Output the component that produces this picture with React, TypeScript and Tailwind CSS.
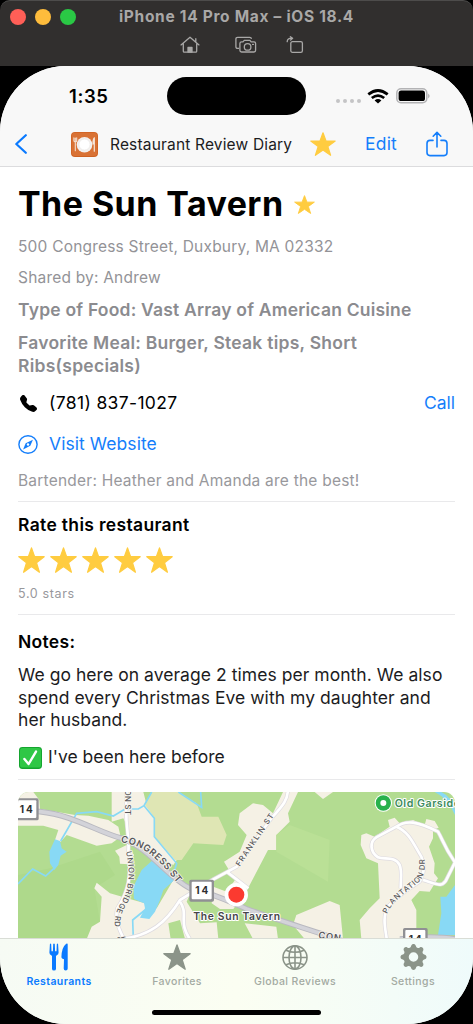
import type { ReactNode } from 'react'
import { BsGearFill, BsTelephoneFill } from 'react-icons/bs'

type IconProps = { className?: string }

const StarIcon = ({ className }: IconProps) => (
  <svg viewBox="0 0 26 24" preserveAspectRatio="none" className={className} fill="currentColor" stroke="currentColor" strokeWidth="1.2" strokeLinejoin="round">
    <path d="M13 .8 16 9h9.2l-7.4 5.5 2.8 8.8L13 18l-7.6 5.3 2.8-8.8L.8 9H10z" />
  </svg>
)

const HomeIcon = () => (
  <svg viewBox="0 0 20 18" className="h-[18px] w-5" fill="none" stroke="currentColor" strokeWidth="1.3" strokeLinecap="round" strokeLinejoin="round">
    <path d="M1 8.9 10 1.2l9 7.7M3.3 8v7.2q0 1 1 1h11.4q1 0 1-1V8M15.8 5.6V2.7" />
    <path d="M8 16v-4.6h4V16z" fill="currentColor" />
  </svg>
)

const CaptureIcon = () => (
  <svg viewBox="0 0 22 18" className="h-[18px] w-[22px]" fill="none" stroke="currentColor" strokeWidth="1.3" strokeLinejoin="round">
    <path d="M4 12.4H2.6q-1.7 0-1.7-1.7V3q0-1.7 1.7-1.7h12.2q1.4 0 1.7 1.5" />
    <path d="M6.6 5.9H8l1.3-1.6h5.6l1.3 1.6h2.7q1.7 0 1.7 1.7v6.7q0 1.7-1.7 1.7H6.6q-1.7 0-1.7-1.7V7.6q0-1.7 1.7-1.7z" />
    <circle cx="12.6" cy="10.9" r="3.3" />
    <path d="M17.6 8.4h.8" strokeLinecap="round" />
  </svg>
)

const RotateIcon = () => (
  <svg viewBox="0 0 18 18" className="h-[18px] w-[18px]" fill="none" stroke="currentColor" strokeWidth="1.3" strokeLinecap="round" strokeLinejoin="round">
    <rect x="4.8" y="5.7" width="11.6" height="10.6" rx="1.6" />
    <path d="M1.2 5.6q.2-3.4 4.6-3.4M4.4.7l2.2 1.6-2 1.8" />
  </svg>
)

const PlateIcon = () => (
  <svg viewBox="0 0 27 25" preserveAspectRatio="none" className="h-[25px] w-[27px]">
    <rect width="27" height="25" rx="4" fill="#cf6222" />
    <rect x=".7" y=".7" width="25.6" height="23.2" rx="3.4" fill="#d97235" />
    <circle cx="13.5" cy="12.7" r="7.8" fill="#f3f1ef" />
    <circle cx="13.5" cy="12.5" r="5.6" fill="#fff" stroke="#e6e3df" strokeWidth=".6" />
    <path d="M4.3 6v12.8M2.9 5.8v3q0 1.2 1.4 1.2t1.4-1.2v-3" stroke="#f5dfcf" strokeWidth="1.1" fill="none" strokeLinecap="round" />
    <path d="M23.3 5.8v13.4M23.3 6q-1.4 1.5-1.3 6h1.3" stroke="#f5e6da" strokeWidth="1.2" fill="#f5e6da" strokeLinecap="round" />
  </svg>
)

const ShareIcon = () => (
  <svg viewBox="0 0 22 26" className="ml-7 h-[26px] w-[22px]" fill="none" stroke="currentColor" strokeWidth="1.6" strokeLinecap="round" strokeLinejoin="round">
    <path d="M7 9.4H4q-3 0-3 3v9.2q0 3 3 3h14q3 0 3-3v-9.2q0-3-3-3h-3M11 16V1.6M7.2 5.2 11 1.4l3.8 3.8" />
  </svg>
)

const CompassIcon = () => (
  <svg viewBox="0 0 20 19" preserveAspectRatio="none" className="h-[19px] w-5" fill="none" stroke="currentColor" strokeWidth="1.4">
    <ellipse cx="10" cy="9.5" rx="9.1" ry="8.7" />
    <path d="m14.9 4.7-2.6 6.1-7.2 3.6 2.6-6.2z" fill="currentColor" stroke="none" />
    <circle cx="10" cy="9.5" r="1.2" fill="#fff" stroke="none" />
  </svg>
)

const CheckIcon = () => (
  <svg viewBox="0 0 23 22" className="h-[22px] w-[23px]">
    <rect width="23" height="22" rx="3.4" fill="#15a52f" />
    <rect x="1" y="1" width="21" height="19.6" rx="2.6" fill="#2fc746" />
    <path d="m5.4 12 4.2 5L17 4.6" fill="none" stroke="#fff" strokeWidth="2.4" strokeLinecap="round" strokeLinejoin="round" />
  </svg>
)

const ForkKnifeIcon = () => (
  <svg viewBox="0 0 20 28" className="h-7 w-5" fill="currentColor">
    <path d="M.9 1.200Q1.600 0 2.200 1.200L2.500 8.200h1.400L4.200 1q.8-1 1.600 0l.3 7.200h1.400L7.800 1.200q.7-1.200 1.300 0l.5 8.200q0 2-1.800 2.900l-.8.7v12.700q0 1.900-2 1.900t-2-1.900V13l-.8-.7Q.4 11.400.4 9.400z" />
    <path d="M17.200.7q1.500-.7 1.500.7v24.200q0 2-2 2t-2-2l.3-9.400q-2.600-.3-2.600-2Q12.600 4.200 17.200.7z" />
  </svg>
)

const GlobeIcon = () => (
  <svg viewBox="0 0 26 25" className="h-[25px] w-[26px]" fill="none" stroke="currentColor" strokeWidth="1.6">
    <ellipse cx="13" cy="12.500" rx="12" ry="11.600" />
    <ellipse cx="13" cy="12.500" rx="6" ry="11.600" />
    <path d="M13 1v23M1 12.500h24M4 5.200q9 4.200 18 0M4 19.800q9-4.200 18 0" />
  </svg>
)

function Shield({ x, y }: { x: number; y: number }) {
  return (
    <g transform={`translate(${x} ${y})`}>
      <rect x="-37" y="-33" width="74" height="66" rx="5" fill="#909094" />
      <rect x="-30" y="-27" width="60" height="53" rx="3" fill="#fff" />
      <text y="11" textAnchor="middle" fontSize="30" fontWeight="700" fill="#2e2e30" textLength="39">14</text>
    </g>
  )
}

const route14 = 'M54 75L120 80C220 90 290 140 365 160C450 190 500 275 570 310C640 325 690 350 740 372C830 405 950 440 1050 475M1200 462Q1300 450 1365 462'

const westRoads = [
  'M380 10C372 130 390 150 385 200C396 270 385 320 352 370C342 410 362 440 375 470',
  'M360 462C450 455 500 410 540 345L640 283L710 245L814 100C850 60 864 45 864 10',
  'M540 350C568 390 530 410 575 470',
  'M680 260L745 310',
]

const eastRoads = [
  'M490 125L430 157C410 170 410 200 435 217C455 225 485 212 500 240C508 260 503 280 503 310',
  'M490 125C520 105 550 108 615 140C630 165 630 180 666 232L638 288C625 305 620 300 570 285',
  'M490 125C530 140 545 185 565 215C577 245 573 265 560 290C530 310 495 330 465 365C445 400 460 440 462 470',
]

// Units are a third of a pixel. The eastern half has its own origin at x=699.
function AreaMap() {
  return (
    <svg viewBox="54 21 1311 441" className="block h-[147px] w-[437px] shrink-0 rounded-t-[11px]" fontFamily="Inter, sans-serif">
      <rect x="54" y="21" width="1311" height="441" fill="#b3dc91" />
      <path d="M54 270L150 250 300 200 345 270 283 310 300 410 270 462H54z" fill="#aed98b" />
      <g fill="#f5f1e5">
        <path d="M54 21H100L118 45 120 72 225 90 265 92 325 105 355 125 362 155 335 175 290 182 200 150 182 170 165 165 175 135 130 122H54z" />
        <path d="M335 21H430L440 60 465 100V155L530 225 520 240 380 170 385 130 370 100 335 110z" />
        <path d="M345 197L380 180 402 210 385 238 360 236 358 215z" />
        <path d="M290 293L330 325 400 345 435 355 435 380 470 370 520 285 575 315 560 350 600 415 650 412 655 462H260L275 425 300 410 305 335 283 310z" />
        <path d="M672 230L719 200 740 150 714 120 719 85 759 55 789 60 819 85 849 21H894L864 85 869 110 829 150V195L804 195 744 310 700 372 660 372 635 355 640 305 680 320 705 285z" />
      </g>
      <path d="M505 415L540 405 555 462H512z" fill="#b3dc91" />
      <path d="M455 21H535L590 55 605 95H655L680 150 670 180 580 175 545 225H525L465 155V100L435 60z" fill="#dfe6b4" />
      <g fill="#88d9f5">
        <path d="M165 163L180 168 185 190 200 200 182 212 175 240 163 255 150 235 148 200z" />
        <path d="M455 228L475 235 490 250 520 268V288L490 315 480 345 465 380 448 402 420 398 435 370 432 355 402 342 400 305 425 255z" />
      </g>
      <path d="M182 168L230 85 290 80 340 93 375 72H415L432 62 455 21M432 62L463 100V155L530 235 522 262M535 21L605 67 602 21M54 297L98 252 137 273 162 250M435 375L398 405 400 462" fill="none" stroke="#88d9f5" strokeWidth="5" />
      <g transform="translate(699 0)">
        <path d="M170 120L290 165 285 290 130 200V150z" fill="#bae096" />
        <g fill="#f5f1e5">
          <path d="M245 21H300L270 42z" />
          <path d="M190 390L290 348 320 360 330 462H215L180 420zM35 415L130 425 135 462H60z" />
          <path d="M385 150L400 145 425 155 470 125 465 105 485 98 500 115 540 105 575 120 580 102 605 108 617 128 600 135V160L588 185 605 235 603 265 615 280 590 320 560 318 535 345 550 375V462H385L380 405 410 370 440 340 435 235 400 220 383 180z" />
        </g>
        <path d="M666 300L640 335H622L625 385 615 450H666zM605 21Q645 40 666 90V75Q655 35 625 21z" fill="#88d9f5" />
      </g>
      <g fill="none" stroke="#dedbe0" strokeWidth="12">
        {westRoads.map((d) => <path key={d} d={d} />)}
        <g transform="translate(699 0)">{eastRoads.map((d) => <path key={d} d={d} />)}</g>
      </g>
      <g fill="none" stroke="#fff" strokeWidth="8">
        {westRoads.map((d) => <path key={d} d={d} />)}
        <g transform="translate(699 0)">{eastRoads.map((d) => <path key={d} d={d} />)}</g>
      </g>
      <path d={route14} fill="none" stroke="#b9b9c0" strokeWidth="17" />
      <path d={route14} fill="none" stroke="#d3d3d9" strokeWidth="11" />

      {/* Street names */}
      <defs>
        <path id="congress" d="M362 172C440 180 485 235 538 302" />
        <path id="union" d="M378 200C394 270 386 320 356 365C342 392 343 420 347 450" />
        <path id="franklin" d="M719 245L824 90" />
        <path id="plantation" d="M1161 387C1180 340 1235 315 1262 285C1278 260 1274 240 1274 200" />
      </defs>
      <g fill="#58585b" stroke="#f8f6ef" strokeWidth="5" paintOrder="stroke" fontSize="23" fontWeight="500">
        <text fontSize="28" fontWeight="600"><textPath href="#congress" textLength="216">CONGRESS ST</textPath></text>
        <text><textPath href="#union" textLength="234">UNION BRIDGE RD</textPath></text>
        <text><textPath href="#franklin" textLength="184">FRANKLIN ST</textPath></text>
        <text><textPath href="#plantation" textLength="210">PLANTATION DR</textPath></text>
        <text transform="translate(374 14) rotate(90)" textLength="76">ON ST</text>
        <text transform="translate(954 459) rotate(9)" fontSize="28" fontWeight="600" letterSpacing="2">CON.</text>
        <text transform="translate(350 475) rotate(-8)">ST</text>
      </g>
      <Shield x={79} y={73} />
      <Shield x={605} y={317} />
      <Shield x={1246} y={462} />
      <circle cx="709" cy="329" r="35" fill="#fff" />
      <circle cx="709" cy="329" r="24" fill="#fb3a30" />
      <g stroke="#fff" strokeWidth="6" strokeLinejoin="round" paintOrder="stroke" fontWeight="600">
        <text x="580" y="405" fontSize="31" fill="#454548" textLength="260">The Sun Tavern</text>
        <text x="1184" y="66" fontSize="32" fill="#3b8a5c" textLength="196">Old Garside</text>
      </g>
      <circle cx="1150" cy="54" r="26" fill="#fff" />
      <circle cx="1150" cy="54" r="23" fill="#28b14c" />
      <circle cx="1150" cy="54" r="9" fill="#fff" />
    </svg>
  )
}

const Divider = ({ className = '' }: IconProps) => <div className={`h-px shrink-0 bg-[#e9e9eb] ${className}`} />

function Tab({ label, active, children }: { label: string; active?: boolean; children: ReactNode }) {
  return (
    <div className={`flex w-[118px] flex-col items-center ${active ? 'text-[#0a7aff]' : 'text-[#8b9489]'}`}>
      <div className="flex h-[30px] items-center justify-center">{children}</div>
      <span className={`mt-0.5 text-[10.5px] leading-4 tracking-[0.4px] ${active ? 'font-semibold' : 'font-medium text-[#a3aaa2]'}`}>{label}</span>
    </div>
  )
}

export default function App() {
  return (
    <div className="flex h-[1024px] w-[473px] flex-col overflow-hidden bg-black font-['Inter',sans-serif] whitespace-nowrap">
      {/* Simulator title bar */}
      <div className="relative h-[66px] shrink-0 rounded-t-[10px] border-t border-[#4d4c4b] bg-[#312f2e] text-[#a9a8a7]">
        <div className="flex h-8 items-center justify-center">
          <span className="text-[15.5px] font-bold tracking-[0.7px]">iPhone 14 Pro Max – iOS 18.4</span>
        </div>
        <div className="absolute top-2 left-[10px] flex gap-[9px]">
          <span className="size-4 rounded-full bg-[#ff5f57]" />
          <span className="size-4 rounded-full bg-[#febc3c]" />
          <span className="size-4 rounded-full bg-[#2ac845]" />
        </div>
        <div className="flex items-center pt-[3px] pl-[180px]">
          <HomeIcon />
          <div className="ml-[35px]"><CaptureIcon /></div>
          <div className="ml-[29px]"><RotateIcon /></div>
        </div>
      </div>

      <div className="flex h-[958px] flex-col overflow-hidden rounded-[66px] bg-white">
        {/* Status bar */}
        <header className="h-[101px] shrink-0 border-b border-[#dcdcde] bg-[#f8f8f8]">
          <div className="flex h-[60px] items-center">
            <span className="mt-0.5 ml-[69px] w-[98px] text-[18.5px] font-semibold tracking-[0.6px]">1:35</span>
            <div className="h-[38px] w-[139px] rounded-full bg-black" />
            <div className="mt-[9px] ml-[30px] flex gap-[3px]">
              {[0, 1, 2, 3].map((i) => <span key={i} className="size-1 rounded-full bg-[#c4c4c6]" />)}
            </div>
            <svg viewBox="0 0 22 15" className="ml-[6px] h-[15px] w-[22px]" fill="none" stroke="#000" strokeWidth="2.700">
              <path d="M1.300 5.400Q11-2.400 20.700 5.400M4.800 9Q11 4.200 17.200 9" />
              <path d="M7.600 11.400Q11 8.600 14.400 11.400L11 14.600z" fill="#000" stroke="none" />
            </svg>
            <svg viewBox="0 0 35 16" className="ml-[7px] h-4 w-[35px]">
              <rect x=".8" y=".8" width="30" height="14" rx="4.200" fill="none" stroke="#b3b3b5" strokeWidth="1.500" />
              <rect x="2.600" y="2.600" width="26.400" height="10.400" rx="2.600" />
              <path d="M32.300 5.400q2.400 2.500 0 5z" fill="#9d9d9f" />
            </svg>
          </div>
          <div className="flex h-9 items-center text-[#147efb]">
            <svg viewBox="0 0 12 20" className="ml-[15px] h-5 w-3" fill="none" stroke="#0a7aff" strokeWidth="2.200" strokeLinecap="round" strokeLinejoin="round">
              <path d="M10.800 1.200 1.300 10l9.500 8.800" />
            </svg>
            <div className="ml-[44px]"><PlateIcon /></div>
            <span className="mt-px ml-3 w-[200px] text-[15.5px] tracking-[0.17px] text-[#1c1c1e]">Restaurant Review Diary</span>
            <StarIcon className="h-6 w-[26px] text-[#ffcc40]" />
            <span className="ml-[29px] w-[33px] text-[17.5px] tracking-[0.2px]">Edit</span>
            <ShareIcon />
          </div>
        </header>

        <main className="flex h-[771px] shrink-0 flex-col overflow-hidden px-[18px] text-[#8b8b8f]">
          <div className="mt-[15px] flex h-11 shrink-0 items-center text-black">
            <h1 className="w-[276px] text-[34px] leading-[44px] font-bold tracking-[0.43px]">The Sun Tavern</h1>
            <StarIcon className="h-[19px] w-[21px] text-[#ffcc40]" />
          </div>
          <p className="mt-[10px] text-[15.5px] leading-[22px] tracking-[0.2px] text-[#939397]">500 Congress Street, Duxbury, MA 02332</p>
          <p className="mt-[9px] text-[15.5px] leading-[22px] tracking-[0.2px] text-[#939397]">Shared by: Andrew</p>
          <p className="mt-[10px] text-[17.5px] leading-[22px] font-semibold tracking-[0.2px]">Type of Food: Vast Array of American Cuisine</p>
          <p className="mt-[10px] text-[17.5px] leading-[23px] font-semibold tracking-[0.25px]">Favorite Meal: Burger, Steak tips, Short<br />Ribs(specials)</p>

          <div className="mt-[14px] flex h-6 shrink-0 items-center text-[17.5px] text-black">
            <BsTelephoneFill className="ml-0.5 size-[17px]" />
            <span className="ml-3 flex-1 tracking-[0.35px]">(781) 837-1027</span>
            <span className="text-[#147efb]">Call</span>
          </div>
          <div className="mt-[17px] flex h-6 shrink-0 items-center text-[17.5px] text-[#147efb]">
            <CompassIcon />
            <span className="ml-[11px] tracking-[0.07px]">Visit Website</span>
          </div>
          <p className="mt-[14px] text-[15.5px] leading-[22px] tracking-[0.22px] text-[#98989c]">Bartender: Heather and Amanda are the best!</p>
          <Divider className="mt-[9px]" />

          <h2 className="mt-[11px] text-[17.5px] leading-6 font-semibold tracking-[0.33px] text-black">Rate this restaurant</h2>
          <div className="mt-[10px] flex h-[26px] shrink-0 gap-[5px]">
            {[1, 2, 3, 4, 5].map((n) => <StarIcon key={n} className="h-[26px] w-[27px] text-[#ffcc40]" />)}
          </div>
          <p className="mt-[13px] text-[12.5px] leading-4 tracking-[0.65px] text-[#98989c]">5.0 stars</p>
          <Divider className="mt-3" />

          <h2 className="mt-[15px] text-[17.5px] leading-6 font-semibold tracking-[0.3px] text-black">Notes:</h2>
          <p className="mt-[10px] text-[17.5px] leading-[22.5px] tracking-[0.05px] text-[#1c1c1e]">
            We go here on average 2 times per month. We also<br />
            spend every Christmas Eve with my daughter and<br />
            her husband.
          </p>
          <div className="mt-[14px] flex h-6 shrink-0 items-center gap-[6px] pl-px text-[17.5px] text-[#1c1c1e]">
            <CheckIcon />
            <span>I've been here before</span>
          </div>
          <Divider className="mt-[9px] mb-3" />
          <AreaMap />
        </main>

        <nav className="relative flex h-[86px] shrink-0 border-t border-[#d9ddd6] bg-linear-to-r from-[#f6fbf4] via-[#fbfef2] to-[#effbfb] pt-[3px]">
          <Tab label="Restaurants" active><ForkKnifeIcon /></Tab>
          <Tab label="Favorites"><StarIcon className="h-[26px] w-7" /></Tab>
          <Tab label="Global Reviews"><GlobeIcon /></Tab>
          <Tab label="Settings"><BsGearFill className="h-[26px] w-[27px]" /></Tab>
          <div className="absolute bottom-[9px] left-[152px] h-[5px] w-[169px] rounded-full bg-black" />
        </nav>
      </div>
    </div>
  )
}
